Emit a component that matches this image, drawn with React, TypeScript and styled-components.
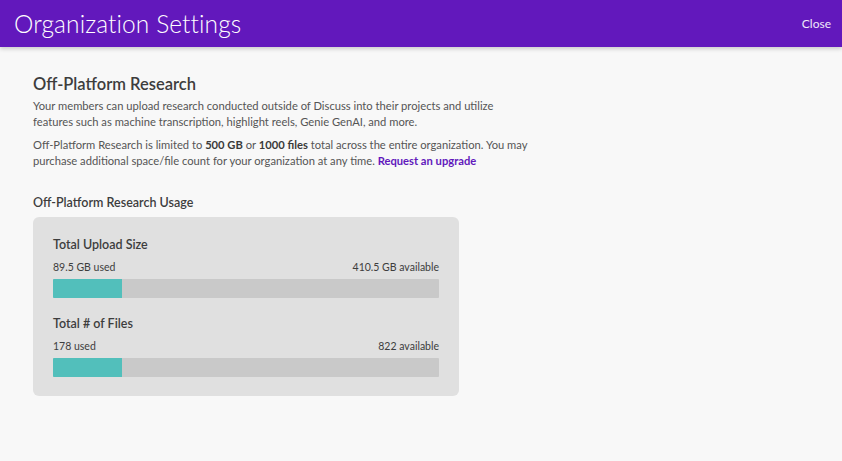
import React from "react";
import styled, { createGlobalStyle } from "styled-components";

const GlobalStyle = createGlobalStyle`
  html, body {
    margin: 0;
    padding: 0;
    background: #f8f8f8;
    font-family: Lato, "Open Sans", sans-serif;
  }
`;

const Header = styled.header`
  height: 47px;
  background: #6218bc;
  display: flex;
  align-items: center;
  justify-content: space-between;
  padding: 0 11px 0 14px;
  box-shadow: 0 2px 4px rgba(0, 0, 0, 0.18);
  color: #fff;
`;

const Title = styled.h1`
  margin: 0;
  font-size: 24.5px;
  font-weight: 300;
  letter-spacing: 0.1px;
`;

const Close = styled.button`
  background: none;
  border: 0;
  padding: 0;
  color: #f0e8fa;
  font: inherit;
  font-size: 12px;
  cursor: pointer;
`;

const Main = styled.main`
  padding: 27px 33px;
`;

const Heading = styled.h2`
  margin: 0 0 4px;
  font-size: 16.5px;
  line-height: 20px;
  font-weight: 600;
  color: #3d3d3d;
`;

const Para = styled.p`
  margin: 0 0 7px;
  width: 499px;
  font-size: 11.2px;
  line-height: 16px;
  color: #555;

  b {
    font-weight: 700;
    color: #3a3a3a;
  }
`;

const Link = styled.a`
  color: #6218bc;
  font-weight: 700;
  text-decoration: none;
`;

const SubHeading = styled.h3`
  margin: 26px 0 7px;
  font-size: 12.5px;
  line-height: 15px;
  font-weight: 600;
  color: #3d3d3d;
`;

const Card = styled.div`
  width: 386px;
  padding: 20px 20px 19px;
  background: #e0e0e0;
  border-radius: 6px;
  display: flex;
  flex-direction: column;
  gap: 18px;
`;

const Meter = styled.div`
  display: flex;
  flex-direction: column;
`;

const MeterTitle = styled.div`
  font-size: 12.5px;
  line-height: 15px;
  font-weight: 600;
  color: #3d3d3d;
  margin-bottom: 9px;
`;

const MeterLabels = styled.div`
  display: flex;
  justify-content: space-between;
  font-size: 10.5px;
  line-height: 13px;
  color: #3d3d3d;
  margin-bottom: 5px;
`;

const Track = styled.div`
  height: 19px;
  background: #c9c9c9;
  border-radius: 1px;
  overflow: hidden;
`;

const Fill = styled.div`
  height: 100%;
  background: #52bfbb;
`;

type UsageProps = {
  title: string;
  used: number;
  total: number;
  unit?: string;
};

const Usage = ({ title, used, total, unit }: UsageProps) => {
  const suffix = unit ? ` ${unit}` : "";
  return (
    <Meter>
      <MeterTitle>{title}</MeterTitle>
      <MeterLabels>
        <span>
          {used}
          {suffix} used
        </span>
        <span>
          {total - used}
          {suffix} available
        </span>
      </MeterLabels>
      <Track>
        <Fill style={{ width: `${(used / total) * 100}%` }} />
      </Track>
    </Meter>
  );
};

export default function App() {
  return (
    <>
      <GlobalStyle />
      <Header>
        <Title>Organization Settings</Title>
        <Close>Close</Close>
      </Header>
      <Main>
        <Heading>Off-Platform Research</Heading>
        <Para>
          Your members can upload research conducted outside of Discuss into
          their projects and utilize features such as machine transcription,
          highlight reels, Genie GenAI, and more.
        </Para>
        <Para>
          Off-Platform Research is limited to <b>500 GB</b> or{" "}
          <b>1000 files</b> total across the entire organization. You may
          purchase additional space/file count for your organization at any
          time. <Link href="#">Request an upgrade</Link>
        </Para>
        <SubHeading>Off-Platform Research Usage</SubHeading>
        <Card>
          <Usage title="Total Upload Size" used={89.5} total={500} unit="GB" />
          <Usage title="Total # of Files" used={178} total={1000} />
        </Card>
      </Main>
    </>
  );
}
